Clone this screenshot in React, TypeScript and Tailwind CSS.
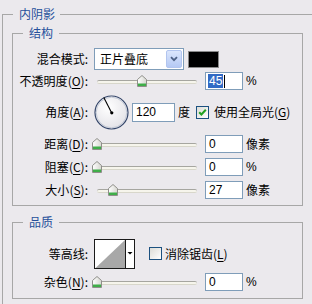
import React from 'react';

const cjk = "font-['SimSun','Noto_Sans_CJK_SC',sans-serif]";
const num = "font-['Liberation_Sans',Arial,sans-serif]";

function Label({ text, hot }: { text: string; hot?: string }) {
    return (
        <div className="w-[75px] shrink-0 whitespace-nowrap text-right">
            {text}
            {hot && (
                <>
                    (<span className="underline underline-offset-2">{hot}</span>)
                </>
            )}
            :
        </div>
    );
}

function Thumb() {
    return (
        <svg width="10" height="12" viewBox="0 0 10 12">
            <defs>
                <linearGradient id="thumbFill" x1="0" y1="0" x2="1" y2="0">
                    <stop offset="0" stopColor="#ffffff" />
                    <stop offset="1" stopColor="#d6d6d0" />
                </linearGradient>
            </defs>
            <path d="M0.5 4.5 L5 0.5 L9.5 4.5 V11.5 H0.5 Z" fill="url(#thumbFill)" stroke="#8f8f8a" />
            <rect x="1" y="8.5" width="8" height="2.5" fill="#3fae49" />
        </svg>
    );
}

// 滑块: pos 是滑块相对轨道起点的偏移
function Slider({ pos }: { pos: number }) {
    return (
        <div className="relative ml-[4px] h-[14px] w-[110px] shrink-0">
            <div className="absolute left-[5px] right-[5px] top-[6px] h-[4px] rounded-full border-t border-b border-t-[#a6a6a0] border-b-[#d8d7cb] bg-[#f6f5ec]" />
            <div className="absolute top-[1px]" style={{ left: pos }}>
                <Thumb />
            </div>
        </div>
    );
}

function Field({ value, w = 'w-[38px]', h = 'h-[18px]', selected }: { value: string; w?: string; h?: string; selected?: boolean }) {
    return (
        <div className={`${w} ${h} ${num} flex shrink-0 items-center border border-[#7f9db9] bg-white pl-[2px] text-[12px]`}>
            {selected ? (
                <>
                    <span className="bg-[#316ac5] px-[1px] leading-[14px] text-white">{value}</span>
                    <span className="ml-[1px] h-[13px] w-[1px] bg-black" />
                </>
            ) : (
                <span className="pl-[1px]">{value}</span>
            )}
        </div>
    );
}

function CheckBox({ checked }: { checked?: boolean }) {
    return (
        <div className="flex h-[13px] w-[13px] shrink-0 items-center justify-center border border-[#1c5180] bg-gradient-to-br from-[#dcdcd7] to-white">
            {checked && (
                <svg width="9" height="9" viewBox="0 0 9 9">
                    <path d="M1.2 4.2 L3.4 6.5 L7.8 1.8" fill="none" stroke="#21a121" strokeWidth="2" />
                </svg>
            )}
        </div>
    );
}

function Dial() {
    return (
        <svg width="35" height="35" viewBox="0 0 35 35" className="ml-[6px] shrink-0">
            <defs>
                <radialGradient id="dialFill" cx="0.4" cy="0.35" r="0.7">
                    <stop offset="0" stopColor="#ffffff" />
                    <stop offset="1" stopColor="#e2e1e6" />
                </radialGradient>
            </defs>
            <circle cx="17.5" cy="17.5" r="16.5" fill="url(#dialFill)" stroke="#34466a" strokeWidth="1.2" />
            <circle cx="17.5" cy="17.5" r="15.3" fill="none" stroke="#b9c0cf" strokeWidth="0.8" />
            <line x1="17.5" y1="17.5" x2="9.8" y2="2.5" stroke="#000" strokeWidth="1.1" />
            <circle cx="17.8" cy="17.8" r="1.6" fill="#000" />
        </svg>
    );
}

function Contour() {
    return (
        <svg width="41" height="30" viewBox="0 0 41 30" className="ml-[6px] shrink-0">
            <rect x="0.5" y="0.5" width="40" height="29" fill="#fff" stroke="#1a1a1a" />
            <polygon points="1.5,29 31,1 31,29" fill="#a8a8a8" />
            <line x1="31.5" y1="1" x2="31.5" y2="29" stroke="#1a1a1a" />
            <polygon points="33.5,13 38.5,13 36,15.5" fill="#000" />
        </svg>
    );
}

export default function App() {
    return (
        <div className={`${cjk} h-[304px] w-[312px] overflow-hidden bg-[#ebe9ed] pl-[2px] pt-[8px] text-[12px] text-black`}>
            <fieldset className="w-[330px] border border-[#a7a7a7] pb-[20px]">
                <legend className="ml-[10px] h-[12px] pl-[6px] pr-[5px] leading-[12px] text-[#26509b]">内阴影</legend>

                {/* 结构 */}
                <fieldset className="ml-[9px] mt-[5px] w-[291px] border border-[#a7a7a7] pb-[4px]">
                    <legend className="ml-[10px] h-[16px] px-[6px] leading-[16px] text-[#26509b]">结构</legend>
                    <div className="mt-[6px] flex flex-col">
                        <div className="flex h-[24px] items-center">
                            <Label text="混合模式" />
                            <div className="ml-[6px] flex h-[22px] w-[90px] shrink-0 items-center border border-[#7f9db9] bg-white">
                                <span className="flex-1 pl-[5px]">正片叠底</span>
                                <div className="mr-[1px] flex h-[18px] w-[16px] items-center justify-center rounded-[2px] border border-[#b2c5ef] bg-gradient-to-b from-[#dbe6fc] to-[#b5c9f4]">
                                    <svg width="8" height="6" viewBox="0 0 8 6">
                                        <path d="M1 1.2 L4 4.2 L7 1.2" fill="none" stroke="#4d6185" strokeWidth="1.8" />
                                    </svg>
                                </div>
                            </div>
                            <div className="ml-[4px] h-[17px] w-[31px] shrink-0 border border-[#8a8a8a] bg-black" />
                        </div>

                        <div className="flex h-[20px] items-center">
                            <Label text="不透明度" hot="O" />
                            <Slider pos={45} />
                            <div className="ml-[3px]">
                                <Field value="45" selected />
                            </div>
                            <span className={`${num} ml-[3px]`}>%</span>
                        </div>

                        <div className="flex h-[42px] items-center">
                            <Label text="角度" hot="A" />
                            <Dial />
                            <div className="ml-[3px]">
                                <Field value="120" w="w-[43px]" h="h-[19px]" />
                            </div>
                            <span className="ml-[3px]">度</span>
                            <div className="ml-[6px]">
                                <CheckBox checked />
                            </div>
                            <span className="ml-[5px] whitespace-nowrap">
                                使用全局光(<span className="underline underline-offset-2">G</span>)
                            </span>
                        </div>

                        <div className="flex h-[22px] items-center">
                            <Label text="距离" hot="D" />
                            <Slider pos={0} />
                            <div className="ml-[3px]">
                                <Field value="0" />
                            </div>
                            <span className="ml-[3px]">像素</span>
                        </div>

                        <div className="flex h-[24px] items-center">
                            <Label text="阻塞" hot="C" />
                            <Slider pos={0} />
                            <div className="ml-[3px]">
                                <Field value="0" />
                            </div>
                            <span className={`${num} ml-[3px]`}>%</span>
                        </div>

                        <div className="flex h-[22px] items-center">
                            <Label text="大小" hot="S" />
                            <Slider pos={16} />
                            <div className="ml-[3px]">
                                <Field value="27" />
                            </div>
                            <span className="ml-[3px]">像素</span>
                        </div>
                    </div>
                </fieldset>

                {/* 品质 */}
                <fieldset className="ml-[9px] mt-[8px] w-[291px] border border-[#a7a7a7] pb-[4px]">
                    <legend className="ml-[10px] h-[16px] px-[6px] leading-[16px] text-[#26509b]">品质</legend>
                    <div className="mt-[7px] flex flex-col">
                        <div className="flex h-[33px] items-center">
                            <Label text="等高线" />
                            <Contour />
                            <div className="ml-[14px]">
                                <CheckBox />
                            </div>
                            <span className="ml-[3px] whitespace-nowrap">
                                消除锯齿(<span className="underline underline-offset-2">L</span>)
                            </span>
                        </div>

                        <div className="flex h-[24px] items-center">
                            <Label text="杂色" hot="N" />
                            <Slider pos={0} />
                            <div className="ml-[3px]">
                                <Field value="0" />
                            </div>
                            <span className={`${num} ml-[3px]`}>%</span>
                        </div>
                    </div>
                </fieldset>
            </fieldset>
        </div>
    );
}
